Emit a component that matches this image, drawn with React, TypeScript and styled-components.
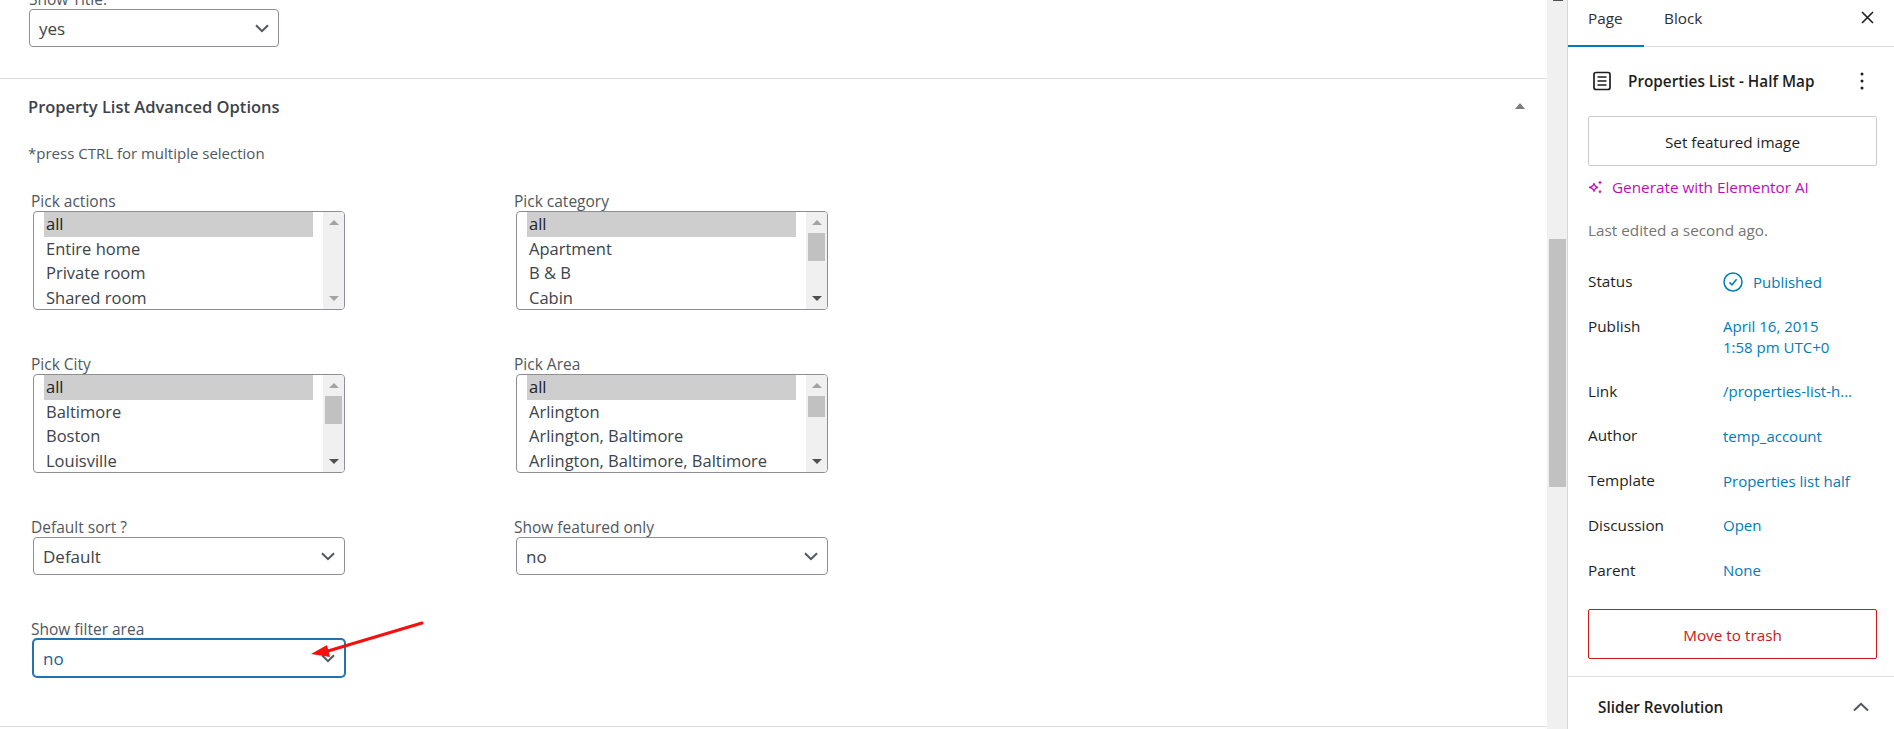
import styled, { createGlobalStyle } from "styled-components";

const GlobalStyle = createGlobalStyle`
  html, body {
    margin: 0;
    padding: 0;
    background: #fff;
  }
  * {
    box-sizing: border-box;
  }
  body {
    font-family: "Open Sans", "Noto Sans", sans-serif;
  }
`;

const Page = styled.div`
  display: flex;
  position: relative;
  width: 1894px;
  height: 729px;
  overflow: hidden;
`;

const Main = styled.main`
  width: 1547px;
  flex-shrink: 0;
`;

const TopSection = styled.section`
  margin-top: -12px;
  padding: 0 29px 31px;
  border-bottom: 1px solid #dcdcde;
`;

const FieldLabel = styled.div<{ $flush?: boolean }>`
  height: 20px;
  margin-left: ${({ $flush }) => ($flush ? "0" : "-2px")};
  margin-bottom: 1px;
  font-size: 15.5px;
  line-height: 22px;
  color: #50575e;
`;

const SelectBox = styled.div<{ $width: number; $focused?: boolean }>`
  display: flex;
  align-items: center;
  justify-content: space-between;
  width: ${({ $width }) => $width}px;
  height: 38px;
  padding: 1px 9px 0 9px;
  border: 1px solid ${({ $focused }) => ($focused ? "#2271b1" : "#8c8f94")};
  border-radius: 4px;
  box-shadow: ${({ $focused }) => ($focused ? "0 0 0 1px #2271b1" : "none")};
  font-size: 17px;
  color: ${({ $focused }) => ($focused ? "#1d5f8f" : "#3c434a")};
  background: #fff;
`;

const AdvancedSection = styled.section`
  height: 648px;
  padding: 15px 21px 0 29px;
  border-bottom: 1px solid #dcdcde;
`;

const SectionHeader = styled.div`
  display: flex;
  align-items: center;
  justify-content: space-between;
  height: 24px;
`;

const SectionTitle = styled.h2`
  margin: 0 0 0 -1px;
  font-size: 16.5px;
  line-height: 25px;
  font-weight: 600;
  color: #3c434a;
`;

const CollapseMark = styled.span`
  width: 0;
  height: 0;
  margin-right: 1px;
  border-left: 5px solid transparent;
  border-right: 5px solid transparent;
  border-bottom: 6px solid #787c82;
`;

const Note = styled.p`
  margin: 25px 0 27px -1px;
  font-size: 15px;
  line-height: 20px;
  color: #50575e;
`;

const FieldGrid = styled.div`
  display: grid;
  grid-template-columns: 483px 483px;
  row-gap: 43px;
  padding-left: 4px;
`;

const Field = styled.div`
  width: 312px;
`;

const ListBox = styled.div`
  display: flex;
  justify-content: space-between;
  width: 312px;
  height: 99px;
  padding: 0 0 0 10px;
  border: 1px solid #8c8f94;
  border-radius: 4px;
  overflow: hidden;
  background: #fff;
`;

const OptionList = styled.div`
  width: 269px;
  font-size: 16.5px;
`;

const Option = styled.div<{ $selected?: boolean }>`
  height: 24.5px;
  padding-left: 2px;
  line-height: 24px;
  white-space: nowrap;
  color: ${({ $selected }) => ($selected ? "#1d2327" : "#3c434a")};
  background: ${({ $selected }) => ($selected ? "#cecece" : "transparent")};
`;

const ListScroll = styled.div`
  display: flex;
  flex-direction: column;
  width: 21px;
  background: #f0f0f0;
`;

const ScrollStep = styled.div`
  display: flex;
  align-items: center;
  justify-content: center;
  flex-shrink: 0;
  height: 21px;
`;

const ScrollSpacer = styled.div`
  flex: 1;
`;

const StepUp = styled.span`
  width: 0;
  height: 0;
  border-left: 5px solid transparent;
  border-right: 5px solid transparent;
  border-bottom: 5px solid #a3a3a3;
`;

const StepDown = styled.span<{ $idle?: boolean }>`
  width: 0;
  height: 0;
  border-left: 5px solid transparent;
  border-right: 5px solid transparent;
  border-top: 5px solid ${({ $idle }) => ($idle ? "#a3a3a3" : "#505050")};
`;

const ListThumb = styled.div<{ $height: number }>`
  flex-shrink: 0;
  height: ${({ $height }) => $height}px;
  margin: 0 2px;
  background: #c1c1c1;
`;

const PageScroll = styled.div`
  position: relative;
  width: 20px;
  flex-shrink: 0;
  background: #f0f0f0;
`;

const PageScrollCap = styled.div`
  width: 10px;
  height: 1px;
  margin-left: 6px;
  background: #505050;
`;

const PageScrollThumb = styled.div`
  width: 17px;
  height: 248px;
  margin: 238px 0 0 2px;
  background: #c1c1c1;
`;

const Sidebar = styled.aside`
  width: 327px;
  flex-shrink: 0;
  border-left: 1px solid #d6d6d6;
  font-size: 15.3px;
  color: #1e1e1e;
`;

const Tabs = styled.div`
  display: flex;
  align-items: flex-start;
  height: 47px;
  border-bottom: 1px solid #ddd;
`;

const Tab = styled.div<{ $active?: boolean }>`
  width: 76px;
  height: 47px;
  padding: 7.5px 0 0 20px;
  line-height: 20px;
  color: #2f2f2f;
  border-bottom: 2px solid ${({ $active }) => ($active ? "#007cba" : "transparent")};
`;

const CloseButton = styled.button`
  display: flex;
  margin: 11px 20px 0 auto;
  padding: 0;
  border: 0;
  background: none;
`;

const PanelBody = styled.div`
  padding: 23px 17px 17px 20px;
  border-bottom: 1px solid #ddd;
`;

const PostHead = styled.div`
  display: flex;
  align-items: center;
  height: 22px;
  padding-left: 4px;
`;

const PostTitle = styled.div`
  flex: 1;
  margin-left: 16px;
  font-weight: 600;
  color: #1e1e1e;
`;

const MoreButton = styled.button`
  display: flex;
  margin-right: 13px;
  padding: 0;
  border: 0;
  background: none;
`;

const OutlineButton = styled.button<{ $danger?: boolean }>`
  display: block;
  width: 289px;
  height: 50px;
  padding: 2px 0 0;
  border: 1px solid ${({ $danger }) => ($danger ? "#cc1818" : "#ccc")};
  border-radius: 2px;
  background: #fff;
  font-family: inherit;
  font-size: 15.3px;
  color: ${({ $danger }) => ($danger ? "#cc1818" : "#1e1e1e")};
`;

const FeaturedButton = styled(OutlineButton)`
  margin-top: 24px;
`;

const TrashButton = styled(OutlineButton)`
  margin-top: 27px;
`;

const AiLink = styled.div`
  display: flex;
  align-items: center;
  gap: 9px;
  height: 22px;
  margin-top: 10px;
  color: #c00bb9;
`;

const LastEdited = styled.div`
  margin-top: 22px;
  line-height: 20px;
  color: #757575;
`;

const MetaList = styled.div`
  display: flex;
  flex-direction: column;
  gap: 22.8px;
  margin-top: 31px;
`;

const MetaRow = styled.div`
  display: grid;
  grid-template-columns: 135px 1fr;
  align-items: start;
`;

const MetaLabel = styled.div`
  line-height: 20px;
  color: #1e1e1e;
`;

const MetaValue = styled.div`
  display: flex;
  align-items: center;
  gap: 10px;
  min-height: 22px;
  font-size: 15px;
  color: #007cba;
  line-height: 21px;
`;

const MetaLines = styled.div`
  font-size: 15px;
  color: #007cba;
  line-height: 21px;
`;

const SliderHead = styled.div`
  display: flex;
  align-items: center;
  justify-content: space-between;
  height: 50px;
  padding: 10px 25px 0 30px;
  font-weight: 600;
`;

const Annotation = styled.svg`
  position: absolute;
  left: 0;
  top: 0;
  pointer-events: none;
`;

const Chevron = () => (
  <svg width="14" height="9" viewBox="0 0 14 9" fill="none">
    <path d="M1 1.2 7 7.2 13 1.2" stroke="#50575e" strokeWidth="2" />
  </svg>
);

type ListField = {
  label: string;
  options: string[];
  thumb?: number;
};

const ListControl = ({ label, options, thumb }: ListField) => (
  <Field>
    <FieldLabel>{label}</FieldLabel>
    <ListBox>
      <OptionList>
        {options.map((option, index) => (
          <Option key={option} $selected={index === 0}>
            {option}
          </Option>
        ))}
      </OptionList>
      <ListScroll>
        <ScrollStep>
          <StepUp />
        </ScrollStep>
        {thumb ? <ListThumb $height={thumb} /> : null}
        <ScrollSpacer />
        <ScrollStep>
          <StepDown $idle={!thumb} />
        </ScrollStep>
      </ListScroll>
    </ListBox>
  </Field>
);

const SelectControl = ({
  label,
  value,
  focused,
}: {
  label: string;
  value: string;
  focused?: boolean;
}) => (
  <Field>
    <FieldLabel>{label}</FieldLabel>
    <SelectBox $width={312} $focused={focused}>
      {value}
      <Chevron />
    </SelectBox>
  </Field>
);

const App = () => {
  return (
    <Page>
      <GlobalStyle />
      <Main>
        <TopSection>
          <FieldLabel $flush>Show Title:</FieldLabel>
          <SelectBox $width={250}>
            yes
            <Chevron />
          </SelectBox>
        </TopSection>
        <AdvancedSection>
          <SectionHeader>
            <SectionTitle>Property List Advanced Options</SectionTitle>
            <CollapseMark />
          </SectionHeader>
          <Note>*press CTRL for multiple selection</Note>
          <FieldGrid>
            <ListControl
              label="Pick actions"
              options={["all", "Entire home", "Private room", "Shared room"]}
            />
            <ListControl
              label="Pick category"
              options={["all", "Apartment", "B & B", "Cabin"]}
              thumb={28}
            />
            <ListControl
              label="Pick City"
              options={["all", "Baltimore", "Boston", "Louisville"]}
              thumb={28}
            />
            <ListControl
              label="Pick Area"
              options={[
                "all",
                "Arlington",
                "Arlington, Baltimore",
                "Arlington, Baltimore, Baltimore",
              ]}
              thumb={21}
            />
            <SelectControl label="Default sort ?" value="Default" />
            <SelectControl label="Show featured only" value="no" />
            <SelectControl label="Show filter area" value="no" focused />
          </FieldGrid>
        </AdvancedSection>
      </Main>
      <PageScroll>
        <PageScrollCap />
        <PageScrollThumb />
      </PageScroll>
      <Sidebar>
        <Tabs>
          <Tab $active>Page</Tab>
          <Tab>Block</Tab>
          <CloseButton aria-label="Close">
            <svg width="13" height="13" viewBox="0 0 13 13" fill="none">
              <path d="M1 1 12 12M12 1 1 12" stroke="#1e1e1e" strokeWidth="1.6" />
            </svg>
          </CloseButton>
        </Tabs>
        <PanelBody>
          <PostHead>
            <svg width="20" height="20" viewBox="0 0 20 20" fill="none">
              <rect x="2" y="1.5" width="16" height="17" rx="2" stroke="#1e1e1e" strokeWidth="1.7" />
              <path d="M5.5 6h9M5.5 10h9M5.5 14h9" stroke="#1e1e1e" strokeWidth="1.5" />
            </svg>
            <PostTitle>Properties List - Half Map</PostTitle>
            <MoreButton aria-label="More">
              <svg width="4" height="18" viewBox="0 0 4 18" fill="#1e1e1e">
                <circle cx="2" cy="2" r="1.5" />
                <circle cx="2" cy="9" r="1.5" />
                <circle cx="2" cy="16" r="1.5" />
              </svg>
            </MoreButton>
          </PostHead>
          <FeaturedButton>Set featured image</FeaturedButton>
          <AiLink>
            <svg width="15" height="14" viewBox="0 0 15 14" fill="none">
              <path
                d="M6 3.2C6.4 5.8 7.6 7 10 7.4 7.6 7.8 6.4 9 6 11.6 5.6 9 4.4 7.8 1 7.4 4.4 7 5.6 5.8 6 3.2Z"
                stroke="#c00bb9"
                strokeWidth="1.2"
              />
              <path d="M12 .8v3.4M10.4 2.5h3.2M12 10.2v3M10.6 11.7h2.8" stroke="#c00bb9" strokeWidth="1.1" />
            </svg>
            Generate with Elementor AI
          </AiLink>
          <LastEdited>Last edited a second ago.</LastEdited>
          <MetaList>
            <MetaRow>
              <MetaLabel>Status</MetaLabel>
              <MetaValue>
                <svg width="20" height="20" viewBox="0 0 20 20" fill="none">
                  <circle cx="10" cy="10" r="9" stroke="#007cba" strokeWidth="1.5" />
                  <path d="M6.4 10.4 9 12.8 13.6 7.2" stroke="#007cba" strokeWidth="1.5" />
                </svg>
                Published
              </MetaValue>
            </MetaRow>
            <MetaRow>
              <MetaLabel>Publish</MetaLabel>
              <MetaLines>
                April 16, 2015
                <br />
                1:58 pm UTC+0
              </MetaLines>
            </MetaRow>
            <MetaRow>
              <MetaLabel>Link</MetaLabel>
              <MetaValue>/properties-list-h...</MetaValue>
            </MetaRow>
            <MetaRow>
              <MetaLabel>Author</MetaLabel>
              <MetaValue>temp_account</MetaValue>
            </MetaRow>
            <MetaRow>
              <MetaLabel>Template</MetaLabel>
              <MetaValue>Properties list half</MetaValue>
            </MetaRow>
            <MetaRow>
              <MetaLabel>Discussion</MetaLabel>
              <MetaValue>Open</MetaValue>
            </MetaRow>
            <MetaRow>
              <MetaLabel>Parent</MetaLabel>
              <MetaValue>None</MetaValue>
            </MetaRow>
          </MetaList>
          <TrashButton $danger>Move to trash</TrashButton>
        </PanelBody>
        <SliderHead>
          Slider Revolution
          <svg width="16" height="10" viewBox="0 0 16 10" fill="none">
            <path d="M1 8.5 8 1.8 15 8.5" stroke="#50575e" strokeWidth="2" />
          </svg>
        </SliderHead>
      </Sidebar>
      <Annotation width="1894" height="729" viewBox="0 0 1894 729">
        <path d="M422 623 328 651" stroke="#f50f0f" strokeWidth="3" strokeLinecap="round" />
        <path d="M311 654 327 645 330 657Z" fill="#f50f0f" />
      </Annotation>
    </Page>
  );
};

export default App;
